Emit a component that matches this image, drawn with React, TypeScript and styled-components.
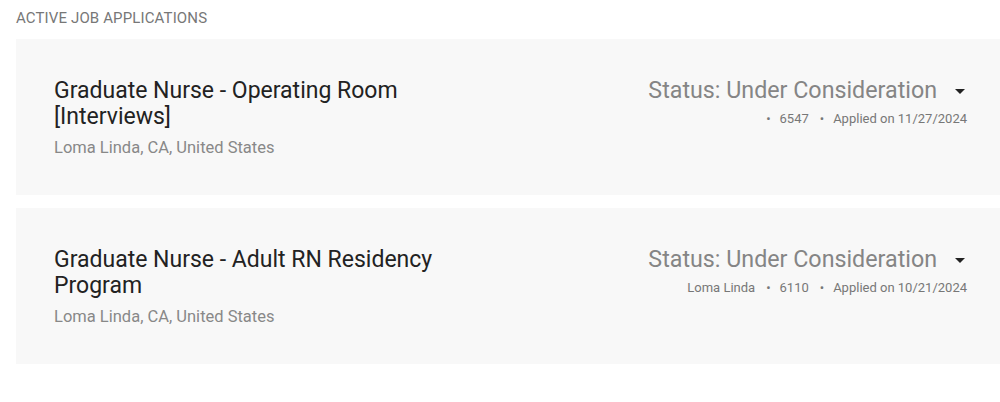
import React from "react"
import styled, { createGlobalStyle } from "styled-components"

interface Application {
  title: string
  location: string
  status: string
  facility?: string
  requisition: string
  appliedOn: string
}

const applications: Application[] = [
  {
    title: "Graduate Nurse - Operating Room [Interviews]",
    location: "Loma Linda, CA, United States",
    status: "Under Consideration",
    facility: "",
    requisition: "6547",
    appliedOn: "11/27/2024",
  },
  {
    title: "Graduate Nurse - Adult RN Residency Program",
    location: "Loma Linda, CA, United States",
    status: "Under Consideration",
    facility: "Loma Linda",
    requisition: "6110",
    appliedOn: "10/21/2024",
  },
]

const GlobalStyle = createGlobalStyle`
  html, body {
    margin: 0;
    padding: 0;
    background: #ffffff;
    overflow: hidden;
  }
  body {
    font-family: Roboto, "Liberation Sans", Arial, sans-serif;
  }
`

const ArrowDown = () => (
  <svg width="24" height="24" viewBox="0 0 24 24" aria-hidden="true">
    <path d="M7 10l5 5 5-5z" fill="#222" />
  </svg>
)

const App = () => {
  return (
    <>
      <GlobalStyle />
      <StyledPage>
        <SectionTitle>Active Job Applications</SectionTitle>
        <CardList>
          {applications.map((app, i) => (
            <Card key={i}>
              <JobInfo>
                <JobTitle>{app.title}</JobTitle>
                <JobLocation>{app.location}</JobLocation>
              </JobInfo>
              <StatusBlock>
                <StatusRow>
                  <StatusText>Status: {app.status}</StatusText>
                  <ArrowDown />
                </StatusRow>
                <Meta>
                  <MetaItem>{app.facility}</MetaItem>
                  <MetaItem $bullet>{app.requisition}</MetaItem>
                  <MetaItem $bullet>Applied on {app.appliedOn}</MetaItem>
                </Meta>
              </StatusBlock>
            </Card>
          ))}
        </CardList>
      </StyledPage>
    </>
  )
}

const StyledPage = styled.div`
  padding: 10px 0 0 16px;
  width: 994px;
`

const SectionTitle = styled.div`
  font-size: 15px;
  line-height: 17px;
  letter-spacing: 0.13px;
  color: #777777;
  text-transform: uppercase;
  margin-bottom: 12px;
`

const CardList = styled.div`
  display: flex;
  flex-direction: column;
  gap: 13px;
`

const Card = styled.div`
  display: flex;
  justify-content: space-between;
  align-items: flex-start;
  background: #f8f8f8;
  height: 156px;
  box-sizing: border-box;
  padding: 39px 38px 0 38px;
`

const JobInfo = styled.div`
  max-width: 440px;
`

const JobTitle = styled.div`
  font-size: 23px;
  line-height: 26px;
  color: #222222;
`

const JobLocation = styled.div`
  font-size: 16.5px;
  line-height: 20px;
  color: #888888;
  margin-top: 8px;
`

const StatusBlock = styled.div`
  display: flex;
  flex-direction: column;
  align-items: flex-end;
`

const StatusRow = styled.div`
  display: flex;
  align-items: center;
  gap: 11px;
`

const StatusText = styled.div`
  font-size: 23.25px;
  line-height: 25px;
  color: #858585;
`

const Meta = styled.div`
  display: flex;
  font-size: 13px;
  line-height: 15px;
  color: #777777;
  margin-top: 8px;
  margin-right: 5px;
`

const MetaItem = styled.span<{ $bullet?: boolean }>`
  ${({ $bullet }) =>
    $bullet &&
    `
    &::before {
      content: "•";
      margin: 0 9px 0 11px;
    }
  `}
`

export default App
